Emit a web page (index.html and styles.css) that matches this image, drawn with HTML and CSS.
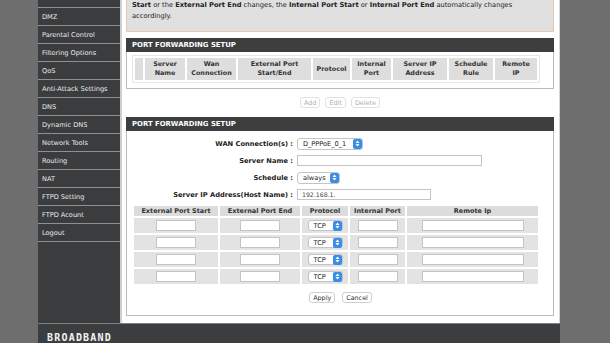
FILE: index.html
```html
<!DOCTYPE html>
<html lang="en">
<head>
    <meta charset="UTF-8">
    <meta name="viewport" content="width=device-width, initial-scale=1.0">
    <title>Port Forwarding</title>
    <link rel="stylesheet" href="styles.css">
</head>
<body>
    <div class="page">
        <div class="main">
            <ul class="sidebar">
                <li class="spacer"></li>
                <li>DMZ</li>
                <li>Parental Control</li>
                <li>Filtering Options</li>
                <li>QoS</li>
                <li>Anti-Attack Settings</li>
                <li>DNS</li>
                <li>Dynamic DNS</li>
                <li>Network Tools</li>
                <li>Routing</li>
                <li>NAT</li>
                <li>FTPD Setting</li>
                <li>FTPD Acount</li>
                <li>Logout</li>
            </ul>

            <div class="content">
                <div class="info_box">
                    <p><b>Start</b> or the <b>External Port End</b> changes, the <b>Internal Port Start</b> or <b>Internal Port End</b> automatically changes</p>
                    <p>accordingly.</p>
                </div>

                <!-- list of rules -->
                <div class="panel">
                    <div class="panel_title">PORT FORWARDING SETUP</div>
                    <div class="panel_body list_body">
                        <table class="rule_list">
                            <colgroup>
                                <col style="width: 8px">
                                <col style="width: 40px">
                                <col style="width: 49px">
                                <col style="width: 73px">
                                <col style="width: 37px">
                                <col style="width: 39px">
                                <col style="width: 54px">
                                <col style="width: 44px">
                                <col>
                            </colgroup>
                            <tr>
                                <th></th>
                                <th>Server<br>Name</th>
                                <th>Wan<br>Connection</th>
                                <th>External Port<br>Start/End</th>
                                <th>Protocol</th>
                                <th>Internal<br>Port</th>
                                <th>Server IP<br>Address</th>
                                <th>Schedule<br>Rule</th>
                                <th>Remote<br>IP</th>
                            </tr>
                        </table>
                    </div>
                </div>

                <div class="button_row list_buttons">
                    <button class="btn off">Add</button>
                    <button class="btn off">Edit</button>
                    <button class="btn off">Delete</button>
                </div>

                <!-- edit form -->
                <div class="panel">
                    <div class="panel_title">PORT FORWARDING SETUP</div>
                    <div class="panel_body form_body">
                        <div class="form_row">
                            <label>WAN Connection(s) :</label>
                            <span class="select wan_select">D_PPPoE_0_1<span class="arrow"><svg width="5" height="7" viewBox="0 0 5 7"><path d="M0.5 3 L2.5 0.5 L4.5 3 Z M0.5 4 L2.5 6.5 L4.5 4 Z" fill="#fff"/></svg></span></span>
                        </div>
                        <div class="form_row">
                            <label>Server Name :</label>
                            <span class="field name_field"></span>
                        </div>
                        <div class="form_row">
                            <label>Schedule :</label>
                            <span class="select schedule_select">always<span class="arrow"><svg width="5" height="7" viewBox="0 0 5 7"><path d="M0.5 3 L2.5 0.5 L4.5 3 Z M0.5 4 L2.5 6.5 L4.5 4 Z" fill="#fff"/></svg></span></span>
                        </div>
                        <div class="form_row">
                            <label>Server IP Address(Host Name) :</label>
                            <span class="field ip_field">192.168.1.</span>
                        </div>

                        <table class="port_table">
                            <colgroup>
                                <col style="width: 84px">
                                <col style="width: 80px">
                                <col style="width: 46px">
                                <col style="width: 55px">
                                <col>
                            </colgroup>
                            <tr>
                                <th>External Port Start</th>
                                <th>External Port End</th>
                                <th>Protocol</th>
                                <th>Internal Port</th>
                                <th>Remote Ip</th>
                            </tr>
                            <tbody id="portRows"></tbody>
                        </table>

                        <div class="button_row form_buttons">
                            <button class="btn">Apply</button>
                            <button class="btn">Cancel</button>
                        </div>
                    </div>
                </div>
            </div>
        </div>

        <div class="footer">BROADBAND</div>
    </div>

<script>
let rows = document.getElementById("portRows");
for (let i = 0; i < 4; i++) {
    rows.innerHTML += `<tr>
        <td><span class="field port_field"></span></td>
        <td><span class="field port_field"></span></td>
        <td><span class="select tcp_select">TCP<span class="arrow"><svg width="5" height="7" viewBox="0 0 5 7"><path d="M0.5 3 L2.5 0.5 L4.5 3 Z M0.5 4 L2.5 6.5 L4.5 4 Z" fill="#fff"/></svg></span></span></td>
        <td><span class="field port_field"></span></td>
        <td><span class="field remote_field"></span></td>
    </tr>`;
}
</script>
</body>
</html>
```

FILE: styles.css
```css
body {
  margin: 0;
  background-color: #6e6e6e;
  font-family: "DejaVu Sans", Verdana, sans-serif;
  font-size: 6.7px;
  color: #222;
  overflow: hidden;
}

.page {
  width: 522px;
  margin-left: 38px;
  margin-top: -16px;
}

.main {
  display: flex;
}

/* left menu */
.sidebar {
  width: 82px;
  margin: 0;
  padding: 6px 0 0 0;
  list-style: none;
  background-color: #3a3c3e;
}

.sidebar li {
  height: 17px;
  line-height: 18px;
  padding-left: 4px;
  border-bottom: 1px solid #8d8f91;
  color: #ececec;
  font-size: 6.6px;
  white-space: nowrap;
}

.content {
  flex: 1;
  background-color: #fff;
  border-left: 2px solid #cfcfcf;
  border-right: 1px solid #d6d6d6;
  padding: 0 5px 7px 4px;
}

.info_box {
  background-color: #e0e0e0;
  border: 1px solid #e7c6b2;
  padding: 15px 5px 9px;
  margin-bottom: 6px;
}

.info_box p {
  margin: 0;
  height: 11px;
  line-height: 11px;
  white-space: nowrap;
}

.panel_title {
  height: 14px;
  line-height: 14px;
  background-color: #3c3e40;
  color: #fff;
  font-weight: bold;
  font-size: 6.9px;
  padding-left: 6px;
}

.panel_body {
  border: 1px solid #bcbcbc;
  border-top: none;
}

.list_body {
  padding: 3px 4px 5px 5px;
}

table {
  border-collapse: separate;
  border-spacing: 2px;
  table-layout: fixed;
}

.rule_list {
  width: 408px;
  height: 28px;
  border: 1px solid #e6e6e6;
}

.rule_list th {
  background-color: #dedede;
  color: #333;
  font-size: 6.4px;
  line-height: 9px;
  padding: 0;
  white-space: nowrap;
}

.button_row {
  display: flex;
  justify-content: center;
  gap: 5px;
}

.list_buttons {
  margin: 8px 0 9px;
}

.btn {
  height: 11px;
  padding: 0 3px;
  background-color: #fff;
  border: 1px solid #cfcfcf;
  border-radius: 3px;
  font-family: "DejaVu Sans", Verdana, sans-serif;
  font-size: 6.4px;
  color: #333;
}

.btn.off {
  color: #b0b0b0;
  border-color: #e2e2e2;
}

.form_body {
  padding: 4px 4px 12px 5px;
}

.form_row {
  display: flex;
  align-items: center;
  height: 17px;
}

.form_row label {
  width: 161px;
  text-align: right;
  font-weight: bold;
  font-size: 6.7px;
  padding-right: 4px;
  white-space: nowrap;
}

.field {
  display: inline-block;
  box-sizing: border-box;
  height: 11px;
  line-height: 9px;
  padding-left: 4px;
  background-color: #fff;
  border: 1px solid #c4c4c4;
  font-size: 6.2px;
  color: #444;
  vertical-align: middle;
}

.name_field {
  width: 185px;
}

.ip_field {
  width: 134px;
}

.select {
  display: inline-flex;
  align-items: center;
  justify-content: space-between;
  box-sizing: border-box;
  height: 12px;
  padding-left: 5px;
  background-color: #fff;
  border: 1px solid #c4c4c4;
  border-radius: 3px;
  font-size: 6.6px;
  color: #222;
  vertical-align: middle;
}

.select .arrow {
  display: flex;
  align-items: center;
  justify-content: center;
  width: 9px;
  height: 10px;
  background-color: #3a8de6;
  border-radius: 2px;
}

.wan_select {
  width: 66px;
}

.schedule_select {
  width: 43px;
}

.tcp_select {
  width: 35px;
  height: 11px;
}

.port_table {
  width: 408px;
  margin-top: 1px;
}

.port_table th {
  height: 10px;
  background-color: #dcdcdc;
  font-size: 6.5px;
  line-height: 10px;
  padding: 0;
  color: #333;
  white-space: nowrap;
}

.port_table td {
  height: 15px;
  background-color: #e3e3e3;
  text-align: center;
  padding: 0;
}

.port_field {
  width: 40px;
}

.remote_field {
  width: 102px;
}

.form_buttons {
  margin-top: 6px;
  gap: 7px;
}

.footer {
  height: 30px;
  background-color: #3b3d3f;
  border-top: 1px solid #7e7e7e;
  color: #f2f2f2;
  font-family: "DejaVu Sans Mono", monospace;
  font-weight: bold;
  font-size: 10px;
  letter-spacing: 1.2px;
  padding: 8px 0 0 9px;
  box-sizing: border-box;
}
```
